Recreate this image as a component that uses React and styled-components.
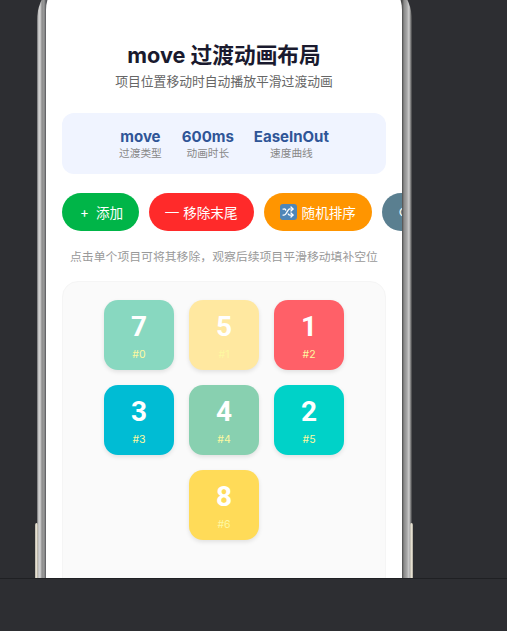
import styled, { createGlobalStyle } from "styled-components";
import { Shuffle } from "lucide-react";

const GlobalStyle = createGlobalStyle`
  html, body {
    margin: 0;
    padding: 0;
    background: #2d2e32;
  }
  * {
    box-sizing: border-box;
  }
`;

const Page = styled.div`
  width: 507px;
  height: 631px;
  display: flex;
  flex-direction: column;
  overflow: hidden;
  background: #2d2e32;
  font-family: Inter, "Noto Sans CJK SC", sans-serif;
`;

const Stage = styled.div`
  height: 578px;
  padding-left: 37px;
  overflow: hidden;
`;

const BottomBar = styled.div`
  flex: 1;
  background: #2d2e32;
  border-top: 1px solid #1f2023;
`;

const Frame = styled.div`
  position: relative;
  width: 375px;
  height: 640px;
  margin-top: -26px;
  padding: 0 10px 0 9px;
  border-radius: 46px 46px 0 0;
  background: linear-gradient(
    90deg,
    #55565a 0,
    #b9b9b9 1px,
    #d6d6d6 3px,
    #8e8e8e 5px,
    #9a9a9a 7px,
    #55565a 9px,
    #4a4a4a 365px,
    #8a8a8a 367px,
    #a8a8a8 370px,
    #cfcfcf 372px,
    #6c6c6c 374px,
    #3a3b3e 375px
  );
`;

const SideStrip = styled.div`
  position: absolute;
  top: 549px;
  bottom: 0;
  width: 3px;
  border-radius: 2px 2px 0 0;
  background: linear-gradient(90deg, #b5b2a6, #e6e0d2, #a8a598);
  ${(p) => (p.$right ? "right: -1px;" : "left: -2px;")}
`;

const Screen = styled.div`
  height: 100%;
  overflow: hidden;
  border-radius: 36px 36px 0 0;
  background: #fff;
  padding: 66px 16px 0;
`;

const Title = styled.h1`
  margin: 0;
  font-size: 21.7px;
  line-height: 30px;
  font-weight: 700;
  text-align: center;
  color: #1a1a2e;
`;

const Subtitle = styled.p`
  margin: 3px 0 0;
  font-size: 12.8px;
  line-height: 18px;
  text-align: center;
  color: #666;
`;

const StatsCard = styled.div`
  height: 61px;
  margin-top: 22px;
  display: flex;
  align-items: center;
  justify-content: center;
  gap: 20px;
  border-radius: 12px;
  background: #f0f4ff;
`;

const Stat = styled.div`
  display: flex;
  flex-direction: column;
  align-items: center;
`;

const StatValue = styled.div`
  font-size: 15px;
  line-height: 19px;
  font-weight: 700;
  color: #2f5597;
`;

const StatLabel = styled.div`
  margin-top: 1px;
  font-size: 10.7px;
  line-height: 14px;
  color: #888;
`;

const ButtonRow = styled.div`
  display: flex;
  gap: 10px;
  margin-top: 19px;
`;

const ActionButton = styled.button`
  flex-shrink: 0;
  height: 38px;
  padding: 0 16px;
  display: flex;
  align-items: center;
  gap: 5px;
  border: none;
  border-radius: 19px;
  background: ${(p) => p.$color};
  color: #fff;
  font-family: inherit;
  font-size: 13.6px;
  white-space: nowrap;
`;

const ButtonGlyph = styled.span`
  width: ${(p) => p.$width}px;
  text-align: center;
`;

const EmojiIcon = styled.span`
  width: 17px;
  height: 16px;
  display: flex;
  align-items: center;
  justify-content: center;
  border-radius: 3px;
  background: #4f86b8;
`;

const Hint = styled.p`
  margin: 17px 0 0;
  font-size: 11.85px;
  line-height: 18px;
  text-align: center;
  white-space: nowrap;
  color: #999;
`;

const Board = styled.div`
  height: 340px;
  margin-top: 15px;
  padding: 18px 41px 0;
  display: flex;
  flex-wrap: wrap;
  justify-content: center;
  align-content: flex-start;
  gap: 15px;
  border: 1px solid #f5f5f5;
  border-radius: 16px;
  background: #fafafa;
`;

const Tile = styled.div`
  width: 70px;
  height: 70px;
  display: flex;
  flex-direction: column;
  align-items: center;
  justify-content: center;
  border-radius: 14px;
  background: ${(p) => p.$color};
  box-shadow: 0 2px 4px rgba(0, 0, 0, 0.1);
`;

const TileNumber = styled.div`
  font-family: Roboto, sans-serif;
  font-size: 28px;
  line-height: 34px;
  font-weight: 700;
  color: #fff;
`;

const TileIndex = styled.div`
  margin-top: 4px;
  font-size: 10.5px;
  line-height: 13px;
  color: #fdf8a0;
`;

const stats = [
  { value: "move", label: "过渡类型" },
  { value: "600ms", label: "动画时长" },
  { value: "EaseInOut", label: "速度曲线" },
];

const tiles = [
  { n: 7, color: "#88d8c0" },
  { n: 5, color: "#ffe8a0" },
  { n: 1, color: "#ff6068" },
  { n: 3, color: "#00bcd4" },
  { n: 4, color: "#88d0b0" },
  { n: 2, color: "#00d2c8" },
  { n: 8, color: "#ffdb58" },
];

export default function App() {
  return (
    <Page>
      <GlobalStyle />
      <Stage>
        <Frame>
          <SideStrip />
          <SideStrip $right />
          <Screen>
            <Title>move 过渡动画布局</Title>
            <Subtitle>项目位置移动时自动播放平滑过渡动画</Subtitle>
            <StatsCard>
              {stats.map((s) => (
                <Stat key={s.label}>
                  <StatValue>{s.value}</StatValue>
                  <StatLabel>{s.label}</StatLabel>
                </Stat>
              ))}
            </StatsCard>
            <ButtonRow>
              <ActionButton $color="#00b548">
                <ButtonGlyph $width={13}>+</ButtonGlyph>
                添加
              </ActionButton>
              <ActionButton $color="#ff2a2a">
                <ButtonGlyph $width={13}>—</ButtonGlyph>
                移除末尾
              </ActionButton>
              <ActionButton $color="#ff9500">
                <EmojiIcon>
                  <Shuffle size={12} color="#fff" strokeWidth={2.5} />
                </EmojiIcon>
                随机排序
              </ActionButton>
              <ActionButton $color="#5a7f90">
                <ButtonGlyph $width={13}>↻</ButtonGlyph>
                重置
              </ActionButton>
            </ButtonRow>
            <Hint>点击单个项目可将其移除，观察后续项目平滑移动填补空位</Hint>
            <Board>
              {tiles.map((t, i) => (
                <Tile key={t.n} $color={t.color}>
                  <TileNumber>{t.n}</TileNumber>
                  <TileIndex>#{i}</TileIndex>
                </Tile>
              ))}
            </Board>
          </Screen>
        </Frame>
      </Stage>
      <BottomBar />
    </Page>
  );
}
